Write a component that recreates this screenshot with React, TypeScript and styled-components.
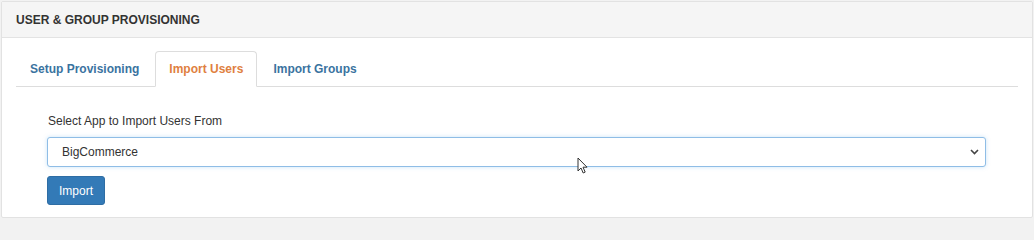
import styled, { createGlobalStyle } from 'styled-components';

const GlobalStyle = createGlobalStyle`
  html, body {
    margin: 0;
    padding: 0;
    background: #f2f2f2;
  }
  body {
    padding: 1px 1px 0 1px;
    font-family: 'Liberation Sans', Arial, sans-serif;
    color: #333;
  }
`;

const Panel = styled.div`
  background: #fff;
  border: 1px solid #e2e2e2;
  border-radius: 2px;
  position: relative;
`;

const PanelHeading = styled.div`
  height: 35px;
  display: flex;
  align-items: center;
  padding: 0 14px;
  background: #f5f5f5;
  border-bottom: 1px solid #e3e3e3;
  font-size: 12px;
  font-weight: bold;
  color: #333;
  text-transform: uppercase;
`;

const PanelBody = styled.div`
  padding: 13px 14px 12px 14px;
`;

const TabList = styled.ul`
  display: flex;
  list-style: none;
  margin: 0;
  padding: 0;
  border-bottom: 1px solid #ddd;
`;

const Tab = styled.li<{ $active?: boolean }>`
  margin-right: 2px;
  margin-bottom: ${p => (p.$active ? '-1px' : '0')};
  padding: 10px 13px;
  height: 14px;
  line-height: 14px;
  font-size: 12px;
  font-weight: bold;
  color: ${p => (p.$active ? '#e08040' : '#3a73a0')};
  background: #fff;
  border: 1px solid ${p => (p.$active ? '#ddd' : 'transparent')};
  border-bottom: ${p => (p.$active ? '1px solid #fff' : '0')};
  border-radius: 4px 4px 0 0;
  cursor: pointer;
`;

const TabPane = styled.div`
  padding: 27px 32px 0 31px;
`;

const Label = styled.label`
  display: block;
  font-size: 12px;
  color: #333;
  margin-bottom: 9px;
  padding-left: 1px;
`;

const SelectWrap = styled.div`
  position: relative;
`;

const Select = styled.select`
  width: 100%;
  height: 30px;
  padding: 0 30px 0 14px;
  font-family: 'Liberation Sans', Arial, sans-serif;
  font-size: 12px;
  color: #333;
  background: #fff;
  border: 1px solid #8fbde6;
  border-radius: 3px;
  box-shadow: 0 0 4px rgba(102, 175, 233, 0.35);
  appearance: none;
  outline: none;
`;

const Chevron = styled.svg`
  position: absolute;
  right: 7px;
  top: 12px;
  pointer-events: none;
`;

const Button = styled.button`
  margin-top: 9px;
  height: 29px;
  padding: 0 11px;
  font-family: 'Liberation Sans', Arial, sans-serif;
  font-size: 12px;
  color: #fff;
  background: #337ab7;
  border: 1px solid #2e6da4;
  border-radius: 3px;
  cursor: pointer;
`;

const Cursor = styled.svg`
  position: absolute;
  left: 575px;
  top: 155px;
  pointer-events: none;
`;

export default function App() {
  return (
    <>
      <GlobalStyle />
      <Panel>
        <PanelHeading>User &amp; Group Provisioning</PanelHeading>
        <PanelBody>
          <TabList>
            <Tab>Setup Provisioning</Tab>
            <Tab $active>Import Users</Tab>
            <Tab>Import Groups</Tab>
          </TabList>
          <TabPane>
            <Label>Select App to Import Users From</Label>
            <SelectWrap>
              <Select defaultValue="bigcommerce">
                <option value="bigcommerce">BigCommerce</option>
              </Select>
              <Chevron width="9" height="6" viewBox="0 0 9 6">
                <path d="M1 1l3.5 3.5L8 1" fill="none" stroke="#444" strokeWidth="1.6" />
              </Chevron>
            </SelectWrap>
            <Button>Import</Button>
          </TabPane>
        </PanelBody>
        <Cursor width="12" height="17" viewBox="0 0 12 17">
          <path d="M1 1v13l3-3 2.2 5 2-0.9-2.2-4.9H10z" fill="#fff" stroke="#333" strokeWidth="1" strokeLinejoin="round" />
        </Cursor>
      </Panel>
    </>
  );
}
